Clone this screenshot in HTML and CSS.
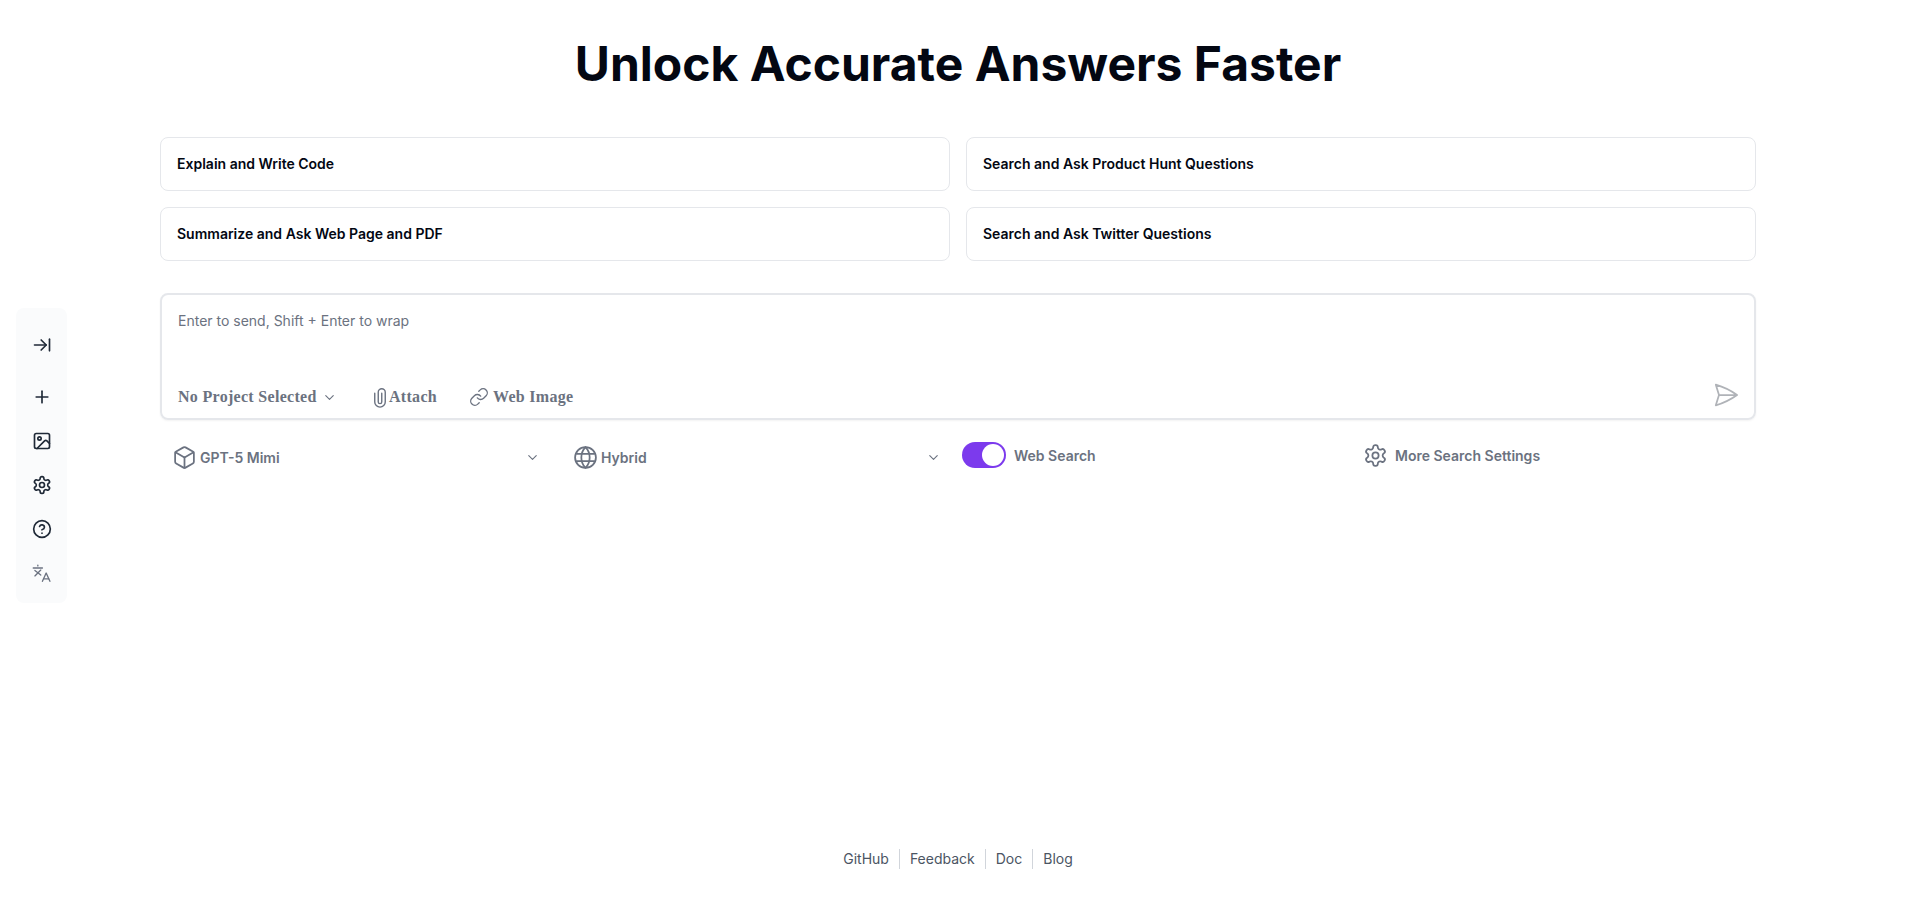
FILE: index.html
```html
<!DOCTYPE html>
<html lang="en">
<head>
    <meta charset="UTF-8">
    <meta name="viewport" content="width=device-width, initial-scale=1.0">
    <title>Unlock Accurate Answers Faster</title>
    <link rel="stylesheet" href="styles.css">
</head>
<body>
    <aside class="sidebar">
        <button class="side-btn side-first"><svg class="icon" viewBox="0 0 24 24"><path d="M17 12H3"/><path d="m11 18 6-6-6-6"/><path d="M21 5v14"/></svg></button>
        <button class="side-btn"><svg class="icon" viewBox="0 0 24 24"><path d="M5 12h14"/><path d="M12 5v14"/></svg></button>
        <button class="side-btn"><svg class="icon" viewBox="0 0 24 24"><rect x="3" y="3" width="18" height="18" rx="2"/><circle cx="9" cy="9" r="2"/><path d="m21 15-3.086-3.086a2 2 0 0 0-2.828 0L6 21"/></svg></button>
        <button class="side-btn"><svg class="icon" viewBox="0 0 24 24"><path d="M12.22 2h-.44a2 2 0 0 0-2 2v.18a2 2 0 0 1-1 1.73l-.43.25a2 2 0 0 1-2 0l-.15-.08a2 2 0 0 0-2.73.73l-.22.38a2 2 0 0 0 .73 2.73l.15.1a2 2 0 0 1 1 1.72v.51a2 2 0 0 1-1 1.74l-.15.09a2 2 0 0 0-.73 2.73l.22.38a2 2 0 0 0 2.73.73l.15-.08a2 2 0 0 1 2 0l.43.25a2 2 0 0 1 1 1.73V20a2 2 0 0 0 2 2h.44a2 2 0 0 0 2-2v-.18a2 2 0 0 1 1-1.73l.43-.25a2 2 0 0 1 2 0l.15.08a2 2 0 0 0 2.73-.73l.22-.39a2 2 0 0 0-.73-2.73l-.15-.08a2 2 0 0 1-1-1.74v-.5a2 2 0 0 1 1-1.74l.15-.09a2 2 0 0 0 .73-2.73l-.22-.38a2 2 0 0 0-2.73-.73l-.15.08a2 2 0 0 1-2 0l-.43-.25a2 2 0 0 1-1-1.73V4a2 2 0 0 0-2-2z"/><circle cx="12" cy="12" r="3"/></svg></button>
        <button class="side-btn"><svg class="icon" viewBox="0 0 24 24"><circle cx="12" cy="12" r="10"/><path d="M9.09 9a3 3 0 0 1 5.83 1c0 2-3 3-3 3"/><path d="M12 17h.01"/></svg></button>
        <button class="side-btn"><svg class="icon icon-lang" viewBox="0 0 24 24"><path d="M1.5 6h11"/><path d="M7 2.5v1"/><path d="M3.5 9l7 5.5"/><path d="M10.5 8.500l-7 7"/><path d="M12.500 22l4.500-10 4.500 10"/><path d="M14 19h6"/></svg></button>
    </aside>

    <main class="main">
        <h1 class="title">Unlock Accurate Answers Faster</h1>

        <div class="cards">
            <div class="card">Explain and Write Code</div>
            <div class="card">Search and Ask Product Hunt Questions</div>
            <div class="card">Summarize and Ask Web Page and PDF</div>
            <div class="card">Search and Ask Twitter Questions</div>
        </div>

        <div class="ask-box">
            <textarea class="ask-input" placeholder="Enter to send, Shift + Enter to wrap"></textarea>
            <div class="tools">
                <span class="tool tool-project">No Project Selected
                    <svg class="chevron" viewBox="0 0 24 24"><path d="m6 9 6 6 6-6"/></svg>
                </span>
                <span class="tool tool-attach">
                    <svg class="tool-icon" viewBox="4 0 16 24"><path d="M6 7v10a6 6 0 0 0 12 0V6a4 4 0 0 0-8 0v11a2 2 0 0 0 4 0V7"/></svg>
                    Attach
                </span>
                <span class="tool tool-link">
                    <svg class="tool-icon tool-icon-link" viewBox="0 0 24 24"><path d="M10 13a5 5 0 0 0 7.540.54l3-3a5 5 0 0 0-7.070-7.070l-1.720 1.710"/><path d="M14 11a5 5 0 0 0-7.540-.54l-3 3a5 5 0 0 0 7.070 7.070l1.710-1.710"/></svg>
                    Web Image
                </span>
                <svg class="send" viewBox="0 0 24 24"><path d="M6 12 3.269 3.125A59.769 59.769 0 0 1 21.485 12 59.768 59.768 0 0 1 3.270 20.875L5.999 12Zm0 0h15.500"/></svg>
            </div>
        </div>

        <div class="options">
            <div class="select">
                <svg class="opt-icon" viewBox="0 0 24 24"><path d="M21 8a2 2 0 0 0-1-1.730l-7-4a2 2 0 0 0-2 0l-7 4A2 2 0 0 0 3 8v8a2 2 0 0 0 1 1.730l7 4a2 2 0 0 0 2 0l7-4A2 2 0 0 0 21 16Z"/><path d="m3.300 7 8.700 5 8.700-5"/><path d="M12 22V12"/></svg>
                <span class="opt-label">GPT-5 Mimi</span>
                <svg class="chevron chevron-end" viewBox="0 0 24 24"><path d="m6 9 6 6 6-6"/></svg>
            </div>
            <div class="select select-scope">
                <svg class="opt-icon" viewBox="0 0 24 24"><circle cx="12" cy="12" r="10"/><path d="M12 2a14.500 14.500 0 0 0 0 20 14.500 14.500 0 0 0 0-20"/><path d="M3.500 8.500h17"/><path d="M3.500 15.500h17"/></svg>
                <span class="opt-label">Hybrid</span>
                <svg class="chevron chevron-end" viewBox="0 0 24 24"><path d="m6 9 6 6 6-6"/></svg>
            </div>
            <div class="switch-wrap">
                <span class="switch"><span class="switch-thumb"></span></span>
                <span class="opt-label">Web Search</span>
            </div>
            <div class="more">
                <svg class="opt-icon" viewBox="0 0 24 24"><path d="M12.220 2h-.44a2 2 0 0 0-2 2v.18a2 2 0 0 1-1 1.730l-.43.25a2 2 0 0 1-2 0l-.15-.08a2 2 0 0 0-2.730.73l-.22.38a2 2 0 0 0 .73 2.730l.15.1a2 2 0 0 1 1 1.720v.51a2 2 0 0 1-1 1.740l-.15.09a2 2 0 0 0-.73 2.730l.22.38a2 2 0 0 0 2.730.73l.15-.08a2 2 0 0 1 2 0l.43.25a2 2 0 0 1 1 1.730V20a2 2 0 0 0 2 2h.44a2 2 0 0 0 2-2v-.18a2 2 0 0 1 1-1.730l.43-.25a2 2 0 0 1 2 0l.15.08a2 2 0 0 0 2.730-.73l.22-.39a2 2 0 0 0-.73-2.730l-.15-.08a2 2 0 0 1-1-1.740v-.5a2 2 0 0 1 1-1.740l.15-.09a2 2 0 0 0 .73-2.730l-.22-.38a2 2 0 0 0-2.730-.73l-.15.08a2 2 0 0 1-2 0l-.43-.25a2 2 0 0 1-1-1.730V4a2 2 0 0 0-2-2z"/><circle cx="12" cy="12" r="3"/></svg>
                <span class="opt-label">More Search Settings</span>
            </div>
        </div>
    </main>

    <footer class="footer">
        <a href="#">GitHub</a>
        <a href="#">Feedback</a>
        <a href="#">Doc</a>
        <a href="#">Blog</a>
    </footer>
</body>
</html>
```

FILE: styles.css
```css
* {
    box-sizing: border-box;
}
body {
    margin: 0;
    min-height: 100vh;
    display: flex;
    flex-direction: column;
    font-family: Inter, "Noto Sans", sans-serif;
    background-color: #fff;
    color: #030712;
}
svg {
    fill: none;
    stroke: currentColor;
    stroke-linecap: round;
    stroke-linejoin: round;
}

/* floating toolbar on the left */
.sidebar {
    position: fixed;
    left: 16px;
    top: 308px;
    width: 51px;
    height: 295px;
    padding-top: 15px;
    display: flex;
    flex-direction: column;
    align-items: center;
    background: #fafbfc;
    border-radius: 8px;
}
.side-btn {
    width: 44px;
    height: 44px;
    flex: none;
    display: flex;
    align-items: center;
    justify-content: center;
    padding: 0;
    border: none;
    background: none;
    color: #1f2937;
}
.side-first {
    margin-bottom: 8px;
}
.icon {
    width: 20px;
    height: 20px;
    stroke-width: 2;
}
.icon-lang {
    color: #6b7280;
    stroke-width: 1.6;
}

.main {
    width: 1596px;
    margin: 0 auto;
    padding-top: 40px;
}
.title {
    margin: 0;
    font-size: 48px;
    line-height: 48px;
    font-weight: 700;
    text-align: center;
}
.cards {
    display: grid;
    grid-template-columns: 1fr 1fr;
    gap: 16px;
    margin-top: 49px;
}
.card {
    height: 54px;
    display: flex;
    align-items: center;
    padding: 0 16px 2px;
    font-size: 14px;
    font-weight: 600;
    border: 1px solid #e5e7eb;
    border-radius: 8px;
}

.ask-box {
    height: 127px;
    margin-top: 32px;
    padding: 16px 16px 0;
    border: 2px solid #e5e7eb;
    border-radius: 8px;
    box-shadow: 0 1px 2px rgba(0, 0, 0, 0.05);
}
.ask-input {
    display: block;
    width: 100%;
    height: 74px;
    padding: 0;
    border: none;
    outline: none;
    resize: none;
    font-family: inherit;
    font-size: 14px;
    line-height: 20px;
}
.ask-input::placeholder {
    color: #6b7280;
    opacity: 1;
}
.tools {
    display: flex;
    align-items: center;
    height: 24px;
    color: #6b7280;
    font-family: "Liberation Serif", serif;
    font-size: 16px;
    letter-spacing: 0.3px;
    font-weight: 700;
}
.tool {
    display: flex;
    align-items: center;
}
.tool-project {
    width: 195px;
}
.tool-attach {
    width: 96px;
    gap: 2px;
}
.tool-link {
    gap: 4px;
}
.tool-icon {
    width: 14px;
    height: 21px;
    stroke-width: 1.600;
}
.tool-icon-link {
    width: 20px;
    height: 20px;
}
.chevron {
    width: 15px;
    height: 15px;
    margin-left: 5px;
    stroke-width: 1.800;
}
.send {
    width: 28px;
    height: 28px;
    margin-left: auto;
    margin-right: -2px;
    margin-bottom: 4px;
    flex: none;
    color: #b0b3b8;
    stroke-width: 1.500;
}

.options {
    display: grid;
    grid-template-columns: repeat(4, 1fr);
    margin-top: 22px;
    height: 26px;
    color: #6b7280;
    font-size: 14px;
    font-weight: 600;
}
.opt-label {
    white-space: nowrap;
}
.opt-icon {
    width: 25px;
    height: 25px;
    flex: none;
    stroke-width: 1.700;
}
.select {
    display: flex;
    align-items: center;
    gap: 3px;
    padding: 0 19px 0 12px;
    position: relative;
    top: 2px;
}
.select-scope {
    padding: 0 17px 0 14px;
}
.chevron-end {
    margin-left: auto;
}
.switch-wrap {
    display: flex;
    align-items: center;
    gap: 8px;
    padding-left: 4px;
}
.switch {
    width: 44px;
    height: 26px;
    display: flex;
    justify-content: flex-end;
    padding: 2px;
    background: #7c3aed;
    border-radius: 13px;
}
.switch-thumb {
    width: 22px;
    height: 22px;
    background: #fff;
    border-radius: 50%;
}
.more {
    display: flex;
    align-items: center;
    gap: 7px;
    padding-left: 6px;
}

.footer {
    margin-top: auto;
    height: 60px;
    display: flex;
    justify-content: center;
    align-items: flex-start;
    font-size: 14px;
    line-height: 20px;
}
.footer a {
    padding: 0 10px;
    color: #4b5563;
    text-decoration: none;
    border-left: 1px solid #d1d5db;
}
.footer a:first-child {
    border-left: none;
}
```
